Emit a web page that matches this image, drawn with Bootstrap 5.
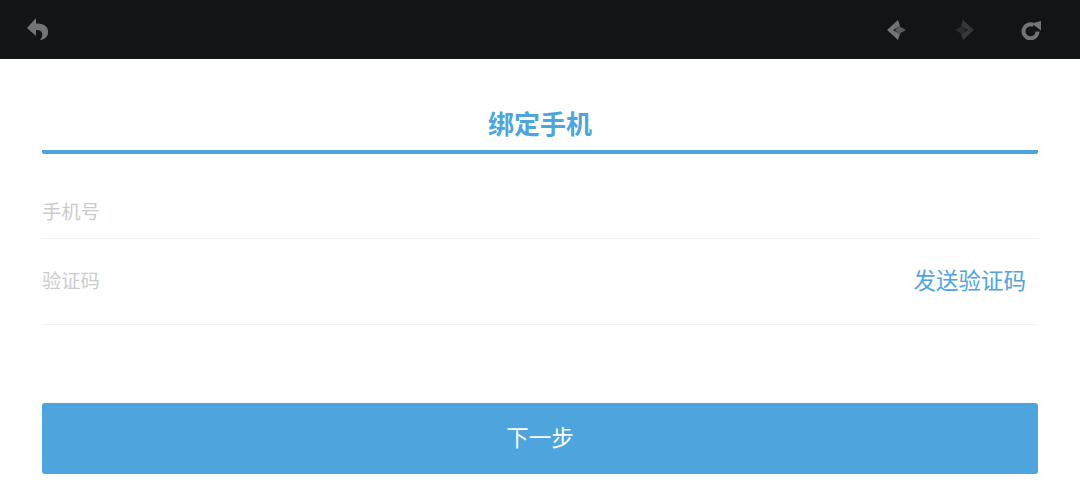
<!DOCTYPE html>
<html lang="zh">
<head>
  <meta charset="UTF-8" />
  <title>绑定手机</title>
  <link href="https://cdn.jsdelivr.net/npm/bootstrap@5.3.0/dist/css/bootstrap.min.css" rel="stylesheet" />
  <style>
    html, body { height: 100%; }
    body {
      background: #fff;
      overflow: hidden;
      font-family: "Liberation Sans", "Noto Sans CJK SC", sans-serif;
    }
    .top-bar { height: 59px; background: #131416; padding: 0 39px 0 26px; }
    .back-icon { display: block; width: 24px; height: 24px; margin-top: -1px; }
    .top-icon { display: block; width: 20px; height: 20px; }
    .fwd-group { gap: 47px; }
    .bind-form { padding: 0 42px; }
    .bind-title {
      height: 95px;
      margin: 0;
      padding-top: 50px;
      font-size: 26px;
      line-height: 33px;
      font-weight: 700;
      color: #4ea4dd;
      text-align: center;
      border-bottom: 4px solid #4ea4dd;
      border-radius: 0 0 2px 2px;
    }
    .field-row { border-bottom: 1px solid #f2f2f2; }
    .field-phone { height: 85px; padding-bottom: 10px; }
    .field-code { height: 86px; padding: 2px 12px 0 0; }
    .field-label { font-size: 19.300px; color: #cbcbcb; }
    .send-code { font-size: 22.500px; color: #4ea4dd; margin-top: -2px; }
    .next-btn {
      display: block;
      width: 100%;
      height: 71px;
      margin-top: 78px;
      border: 0;
      border-radius: 3px;
      background: #4ea4dd;
      color: #fff;
      font-size: 22.500px;
    }
  </style>
</head>
<body>
  <div class="top-bar d-flex align-items-center justify-content-between">
    <svg class="back-icon" viewBox="0 0 24 24"><path fill="#737476" d="M1 11 10 1v5.500c8-.5 13 3.500 12 9.500-.5 4-3 6.500-8 7 3-3 3-8 0-9.500-1.200-.5-2.500-.5-4-.5v6z"/></svg>
    <div class="d-flex align-items-center fwd-group">
      <svg class="top-icon" viewBox="0 0 20 20"><path fill="#737476" d="M0 10 11 0l2 6-7 4 7 4-2 6z"/><path fill="#5a5b5d" d="M12 6l7 4-7 4-4-4z"/></svg>
      <svg class="top-icon" viewBox="0 0 20 20"><path fill="#37383a" d="M20 10 9 0 7 6l7 4-7 4 2 6z"/><path fill="#2b2c2e" d="M8 6l-7 4 7 4 4-4z"/></svg>
      <svg class="top-icon" viewBox="0 0 20 20"><path fill="none" stroke="#737476" stroke-width="4" d="M16.500 11.500A7 7 0 1 1 12.500 5"/><path fill="#737476" d="M10.500 3.500 20 1v9.500z"/></svg>
    </div>
  </div>
  <form class="bind-form">
    <h1 class="bind-title">绑定手机</h1>
    <div class="field-row field-phone d-flex align-items-end">
      <span class="field-label">手机号</span>
    </div>
    <div class="field-row field-code d-flex align-items-center justify-content-between">
      <span class="field-label">验证码</span>
      <a class="send-code text-decoration-none" href="#">发送验证码</a>
    </div>
    <button type="button" class="next-btn">下一步</button>
  </form>
  <script src="https://cdn.jsdelivr.net/npm/bootstrap@5.3.0/dist/js/bootstrap.bundle.min.js"></script>
</body>
</html>
